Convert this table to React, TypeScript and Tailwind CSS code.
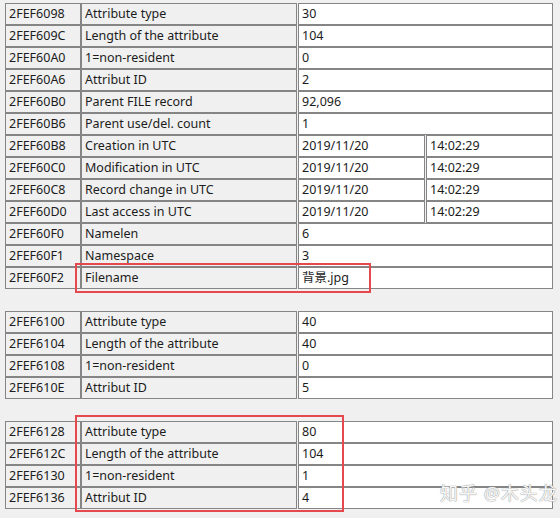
type Row = { addr: string; label: string; value: string; time?: string };

const group1: Row[] = [
  { addr: "2FEF6098", label: "Attribute type", value: "30" },
  { addr: "2FEF609C", label: "Length of the attribute", value: "104" },
  { addr: "2FEF60A0", label: "1=non-resident", value: "0" },
  { addr: "2FEF60A6", label: "Attribut ID", value: "2" },
  { addr: "2FEF60B0", label: "Parent FILE record", value: "92,096" },
  { addr: "2FEF60B6", label: "Parent use/del. count", value: "1" },
  { addr: "2FEF60B8", label: "Creation in UTC", value: "2019/11/20", time: "14:02:29" },
  { addr: "2FEF60C0", label: "Modification in UTC", value: "2019/11/20", time: "14:02:29" },
  { addr: "2FEF60C8", label: "Record change in UTC", value: "2019/11/20", time: "14:02:29" },
  { addr: "2FEF60D0", label: "Last access in UTC", value: "2019/11/20", time: "14:02:29" },
  { addr: "2FEF60F0", label: "Namelen", value: "6" },
  { addr: "2FEF60F1", label: "Namespace", value: "3" },
  { addr: "2FEF60F2", label: "Filename", value: "背景.jpg" },
];

const group2: Row[] = [
  { addr: "2FEF6100", label: "Attribute type", value: "40" },
  { addr: "2FEF6104", label: "Length of the attribute", value: "40" },
  { addr: "2FEF6108", label: "1=non-resident", value: "0" },
  { addr: "2FEF610E", label: "Attribut ID", value: "5" },
];

const group3: Row[] = [
  { addr: "2FEF6128", label: "Attribute type", value: "80" },
  { addr: "2FEF612C", label: "Length of the attribute", value: "104" },
  { addr: "2FEF6130", label: "1=non-resident", value: "1" },
  { addr: "2FEF6136", label: "Attribut ID", value: "4" },
];

function Cell({ text, w, white }: { text: string; w: string; white?: boolean }) {
  return (
    <div
      className={`${w} h-[22px] border border-[#858585] flex items-center pl-[3px] text-[12.5px] text-[#1c1c1c] whitespace-nowrap overflow-hidden ${
        white ? "bg-white" : "bg-[#f0f0f0]"
      }`}
    >
      {text}
    </div>
  );
}

function Group({ rows }: { rows: Row[] }) {
  return (
    <div className="flex flex-col">
      {rows.map((r) => (
        <div key={r.addr} className="flex">
          <Cell text={r.addr} w="w-[76px]" />
          <Cell text={r.label} w="w-[216px]" />
          <div className="ml-[1px] flex gap-[1px]">
            {r.time ? (
              <>
                <Cell text={r.value} w="w-[127px]" white />
                <Cell text={r.time} w="w-[127px]" white />
              </>
            ) : (
              <Cell text={r.value} w="w-[255px]" white />
            )}
          </div>
        </div>
      ))}
    </div>
  );
}

export default function App() {
  return (
    <div
      className="relative w-[560px] h-[518px] bg-[#f0f0f0] pt-[3px] pl-[5px] overflow-hidden"
      style={{ fontFamily: '"Noto Sans", "Noto Sans CJK SC", sans-serif' }}
    >
      <div className="flex flex-col gap-[22px]">
        <Group rows={group1} />
        <Group rows={group2} />
        <Group rows={group3} />
      </div>

      {/* highlight boxes */}
      <div className="absolute left-[75px] top-[263px] w-[296px] h-[30px] border-[2.5px] border-[#e5484d]" />
      <div className="absolute left-[75px] top-[415px] w-[269px] h-[97px] border-[2.5px] border-[#e5484d]" />

      {/* watermark */}
      <div
        className="absolute left-[440px] top-[480px] text-[18px] text-[#f6f6f6] tracking-[1px] whitespace-nowrap"
        style={{ textShadow: "0 0 1px #9a9a9a, 0 0 1px #9a9a9a" }}
      >
        知乎 @木头龙
      </div>
    </div>
  );
}
